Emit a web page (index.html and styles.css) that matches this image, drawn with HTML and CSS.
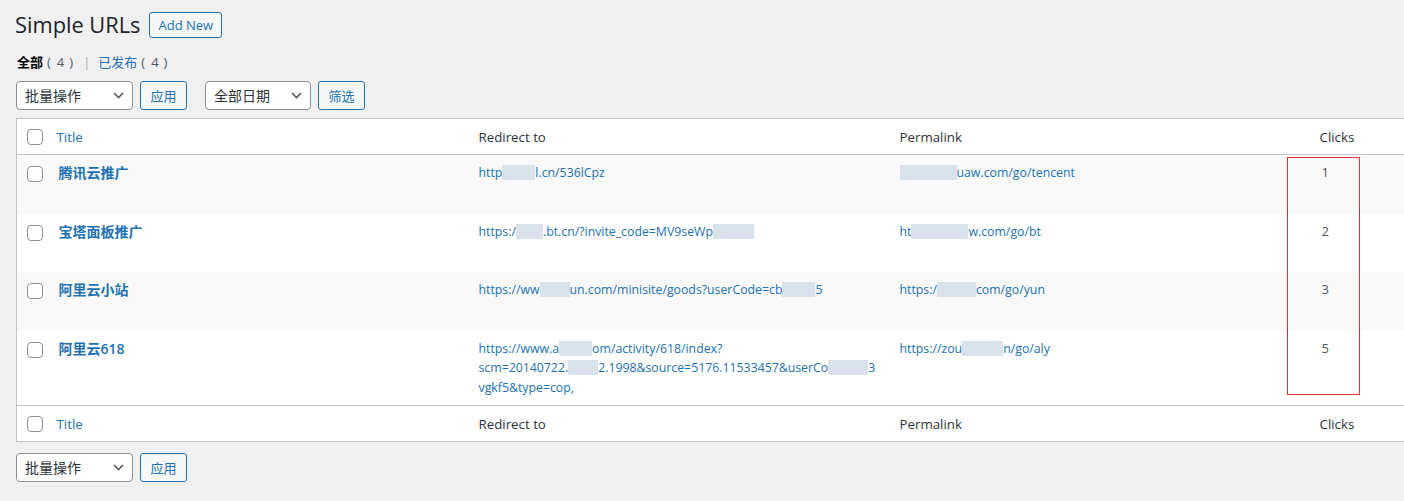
FILE: index.html
```html
<!DOCTYPE html>
<html lang="zh-CN">
<head>
<meta charset="utf-8">
<title>Simple URLs</title>
<link rel="stylesheet" href="styles.css">
</head>
<body>
<div class="wrap">
  <div class="page-head">
    <h1 class="page-title">Simple URLs</h1>
    <a class="page-title-action" href="#">Add New</a>
  </div>

  <ul class="subsubsub">
    <li class="current">全部<span class="count"><i class="pl">(</i>4<i class="pr">)</i></span></li>
    <li class="sep">|</li>
    <li><a href="#">已发布<span class="count"><i class="pl">(</i>4<i class="pr">)</i></span></a></li>
  </ul>

  <div class="tablenav">
    <div class="select sel-bulk"><span>批量操作</span><svg width="11" height="7" viewBox="0 0 11 7"><polyline points="1,1 5.5,5.5 10,1" fill="none" stroke="#50575e" stroke-width="1.6"/></svg></div>
    <button class="button">应用</button>
    <div class="select sel-date"><span>全部日期</span><svg width="11" height="7" viewBox="0 0 11 7"><polyline points="1,1 5.5,5.5 10,1" fill="none" stroke="#50575e" stroke-width="1.6"/></svg></div>
    <button class="button">筛选</button>
  </div>

  <div class="table-wrap">
    <table class="list-table">
      <colgroup>
        <col class="c-cb"><col class="c-title"><col class="c-redirect"><col class="c-perma"><col class="c-clicks">
      </colgroup>
      <thead>
        <tr>
          <td class="check-column"><span class="cb"></span></td>
          <th><a href="#">Title</a></th>
          <th>Redirect to</th>
          <th>Permalink</th>
          <th>Clicks</th>
        </tr>
      </thead>
      <tbody>
        <tr class="alt">
          <th class="check-column"><span class="cb"></span></th>
          <td><strong><a class="row-title" href="#">腾讯云推广</a></strong><div class="row-actions"></div></td>
          <td><a class="url" href="#">http<span class="rd" style="width:33px"></span>l.cn/536lCpz</a></td>
          <td><a class="url" href="#"><span class="rd" style="width:57px"></span>uaw.com/go/tencent</a></td>
          <td class="num">1</td>
        </tr>
        <tr>
          <th class="check-column"><span class="cb"></span></th>
          <td><strong><a class="row-title" href="#">宝塔面板推广</a></strong><div class="row-actions"></div></td>
          <td><a class="url" href="#">https:/<span class="rd" style="width:27px"></span>.bt.cn/?invite_code=MV9seWp<span class="rd" style="width:41px"></span></a></td>
          <td><a class="url" href="#">ht<span class="rd" style="width:57px"></span>w.com/go/bt</a></td>
          <td class="num">2</td>
        </tr>
        <tr class="alt">
          <th class="check-column"><span class="cb"></span></th>
          <td><strong><a class="row-title" href="#">阿里云小站</a></strong><div class="row-actions"></div></td>
          <td><a class="url" href="#">https://ww<span class="rd" style="width:30px"></span>un.com/minisite/goods?userCode=cb<span class="rd" style="width:33px"></span>5</a></td>
          <td><a class="url" href="#">https:/<span class="rd" style="width:39px"></span>com/go/yun</a></td>
          <td class="num">3</td>
        </tr>
        <tr>
          <th class="check-column"><span class="cb"></span></th>
          <td><strong><a class="row-title" href="#">阿里云618</a></strong><div class="row-actions"></div></td>
          <td><a class="url" href="#">https://www.a<span class="rd" style="width:33px"></span>om/activity/618/index?<br>scm=20140722.<span class="rd" style="width:30px"></span>2.1998&amp;source=5176.11533457&amp;userCo<span class="rd" style="width:40px"></span>3<br>vgkf5&amp;type=cop,</a></td>
          <td><a class="url" href="#">https://zou<span class="rd" style="width:41px"></span>n/go/aly</a></td>
          <td class="num">5</td>
        </tr>
      </tbody>
      <tfoot>
        <tr>
          <td class="check-column"><span class="cb"></span></td>
          <th><a href="#">Title</a></th>
          <th>Redirect to</th>
          <th>Permalink</th>
          <th>Clicks</th>
        </tr>
      </tfoot>
    </table>
    <div class="highlight-box"></div>
  </div>

  <div class="tablenav bottom">
    <div class="select sel-bulk"><span>批量操作</span><svg width="11" height="7" viewBox="0 0 11 7"><polyline points="1,1 5.5,5.5 10,1" fill="none" stroke="#50575e" stroke-width="1.6"/></svg></div>
    <button class="button">应用</button>
  </div>
</div>
</body>
</html>
```

FILE: styles.css
```css
html, body {
  margin: 0;
  padding: 0;
  overflow: hidden;
}
body {
  background: #f0f0f1;
  color: #3c434a;
  font-family: "Open Sans", "Noto Sans CJK SC", sans-serif;
  font-size: 13px;
  line-height: 1.4;
}
a {
  color: #2271b1;
  text-decoration: none;
}
.wrap {
  padding-left: 16px;
}
.page-head {
  display: flex;
  align-items: center;
  padding-top: 10px;
  height: 30px;
}
.page-title {
  margin: 0 0 0 -1px;
  font-size: 21.8px;
  font-weight: 400;
  line-height: 30px;
  color: #1d2327;
}
.page-title-action {
  box-sizing: border-box;
  margin-left: 9px;
  height: 26px;
  line-height: 24px;
  padding: 0 8px;
  border: 1px solid #2271b1;
  border-radius: 3px;
  background: #f6f7f7;
  font-size: 13px;
  color: #2271b1;
}
.subsubsub {
  list-style: none;
  margin: 9px 0 0 1px;
  padding: 0;
  display: flex;
  align-items: center;
  height: 26px;
  font-size: 13px;
  color: #646970;
}
.subsubsub .current {
  color: #000;
  font-weight: 600;
}
.subsubsub .count {
  font-weight: 400;
  color: #50575e;
  margin-left: 4px;
}
.subsubsub .count i {
  font-style: normal;
}
.subsubsub .count .pl { margin-right: 6px; }
.subsubsub .count .pr { margin-left: 5px; }
.subsubsub .sep {
  margin: 0 8px 0 10px;
  color: #a7aaad;
}
.tablenav {
  display: flex;
  align-items: center;
  margin-top: 6px;
  height: 29px;
}
.select {
  box-sizing: border-box;
  height: 29px;
  border: 1px solid #8c8f94;
  border-radius: 4px;
  background: #fff;
  display: flex;
  align-items: center;
  justify-content: space-between;
  padding: 0 8px 0 8px;
  font-size: 14px;
  color: #2c3338;
}
.sel-bulk { width: 117px; }
.sel-date { width: 106px; margin-left: 18px; }
.button {
  box-sizing: border-box;
  height: 29px;
  width: 47px;
  margin-left: 7px;
  border: 1px solid #2271b1;
  border-radius: 3px;
  background: #f6f7f7;
  color: #2271b1;
  font-family: "Open Sans", "Noto Sans CJK SC", sans-serif;
  font-size: 13px;
  padding: 0;
}
.table-wrap {
  position: relative;
  margin-top: 8px;
  width: 1760px;
}
.list-table {
  table-layout: fixed;
  border-collapse: collapse;
  width: 1760px;
  background: #fff;
  border: 1px solid #c3c4c7;
}
.c-cb { width: 30px; }
.c-title { width: 422px; }
.c-redirect { width: 421px; }
.c-perma { width: 420px; }
.c-clicks { width: 466px; }

.list-table th,
.list-table td {
  text-align: left;
  vertical-align: top;
  padding: 8px 10px;
  font-size: 13px;
  line-height: 19.5px;
  font-weight: 400;
}
.list-table thead th,
.list-table tfoot th {
  font-size: 13.3px;
  color: #2c3338;
  padding-top: 9px;
  padding-bottom: 6.5px;
}
.list-table thead tr {
  border-bottom: 1px solid #c3c4c7;
}
.list-table tfoot tr {
  border-top: 1px solid #c3c4c7;
}
.list-table .check-column {
  padding: 10px 0 0 10px;
}
.list-table tbody .check-column {
  padding-top: 11px;
}
.cb {
  display: block;
  width: 16px;
  height: 16px;
  box-sizing: border-box;
  border: 1px solid #8c8f94;
  border-radius: 4px;
  background: #fff;
}
tbody tr.alt {
  background: #f9f9f9;
}
.list-table strong {
  display: block;
  font-size: 14px;
  line-height: 19.5px;
}
.row-title {
  font-size: 14px;
  font-weight: 600;
  margin-left: 2px;
}
.row-actions {
  height: 23px;
}
.url {
  display: block;
  font-size: 12.3px;
  line-height: 19.5px;
  white-space: nowrap;
}
.num {
  padding-left: 12px !important;
  color: #50575e;
}
.rd {
  display: inline-block;
  height: 15px;
  vertical-align: -3px;
  background: #dae3eb;
}
.highlight-box {
  position: absolute;
  left: 1271px;
  top: 39px;
  width: 73px;
  height: 238px;
  box-sizing: border-box;
  border: 1px solid #e0303a;
}
.tablenav.bottom {
  margin-top: 11px;
}
```
